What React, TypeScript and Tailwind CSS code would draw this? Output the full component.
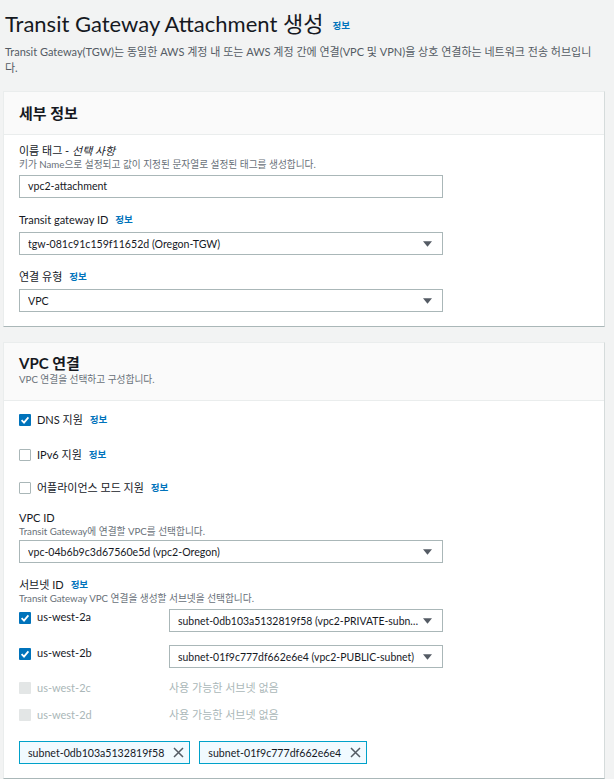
import React from "react";

const Info = ({ className = "" }: { className?: string }) => (
  <span className={"text-[9.5px] font-bold text-[#0073bb] " + (className || "ml-[7px]")}>정보</span>
);

const Arrow = () => (
  <svg width="9" height="6" viewBox="0 0 9 6" className="shrink-0">
    <path d="M0 0.3 L9 0.3 L4.5 5.8 Z" fill="#545b64" />
  </svg>
);

const Select = ({
  value,
  className = "",
  textClass = "text-[10.6px]",
}: {
  value: string;
  className?: string;
  textClass?: string;
}) => (
  <div
    className={
      "flex items-center h-[23px] border border-[#aab7b8] bg-white pl-[8px] pr-[10px] gap-[4px] " + className
    }
  >
    <span className={"flex-1 truncate leading-[14px] " + textClass}>{value}</span>
    <Arrow />
  </div>
);

const Check = ({ state }: { state: "on" | "off" | "disabled" }) => {
  if (state === "on")
    return (
      <span className="w-[12px] h-[12px] bg-[#0073bb] rounded-[1px] flex items-center justify-center shrink-0">
        <svg width="10" height="10" viewBox="0 0 10 10">
          <path d="M1.6 5.2 L4 7.6 L8.4 2.4" stroke="#fff" strokeWidth="1.8" fill="none" />
        </svg>
      </span>
    );
  if (state === "off")
    return <span className="w-[12px] h-[12px] border border-[#aab7b8] bg-white rounded-[1px] shrink-0" />;
  return <span className="w-[12px] h-[12px] bg-[#e3e6e6] rounded-[1px] shrink-0" />;
};

const XIcon = () => (
  <svg width="11" height="11" viewBox="0 0 11 11">
    <path d="M1 1 L10 10 M10 1 L1 10" stroke="#545b64" strokeWidth="1.5" />
  </svg>
);

const Token = ({ label }: { label: string }) => (
  <div className="flex items-center h-[23px] border border-[#00a1c9] bg-[#f1faff] pl-[8px] pr-[5px] gap-[9px]">
    <span className="text-[10.6px] leading-[14px]">{label}</span>
    <XIcon />
  </div>
);

export default function App() {
  return (
    <div className="w-[614px] min-h-[779px] bg-[#f2f3f3] text-[#16191f] font-['Lato','Noto_Sans_CJK_KR',sans-serif] overflow-hidden">
      <div className="pl-[5px] pr-[18px] pt-[7px]">
        <h1 className="text-[22px] leading-[30px] font-normal flex items-center">
          <span>Transit Gateway Attachment 생성</span>
          <Info className="ml-[9px] mt-[4px]" />
        </h1>
        <p className="text-[11px] leading-[16px] text-[#545b64] mt-[3px]">
          Transit Gateway(TGW)는 동일한 AWS 계정 내 또는 AWS 계정 간에 연결(VPC 및 VPN)을 상호 연결하는 네트워크 전송 허브입니다.
        </p>
      </div>

      {/* Card 1 */}
      <div className="ml-[3px] w-[602px] mt-[15px] bg-white border border-[#eaeded] border-b-[#aab7b8] border-r-[#d5dbdb]">
        <div className="h-[43px] bg-[#fafafa] border-b border-[#eaeded] px-[15px] flex items-center">
          <h2 className="text-[15px] font-bold leading-[20px]">세부 정보</h2>
        </div>
        <div className="px-[15px] pt-[9px] pb-[14px] w-[454px]">
          <div className="text-[11px] leading-[14px]">
            이름 태그 - <i>선택 사항</i>
          </div>
          <div className="text-[9.7px] leading-[13px] text-[#687078]">
            키가 Name으로 설정되고 값이 지정된 문자열로 설정된 태그를 생성합니다.
          </div>
          <div className="mt-[4px] h-[23px] border border-[#aab7b8] bg-white pl-[8px] flex items-center text-[10.6px]">
            vpc2-attachment
          </div>

          <div className="mt-[14px] text-[11px] leading-[16px] flex items-center">
            Transit gateway ID <Info />
          </div>
          <Select className="mt-[4px]" value="tgw-081c91c159f11652d (Oregon-TGW)" />

          <div className="mt-[14px] text-[11px] leading-[16px] flex items-center">
            연결 유형 <Info />
          </div>
          <Select className="mt-[4px]" value="VPC" />
        </div>
      </div>

      {/* Card 2 */}
      <div className="ml-[3px] w-[602px] mt-[15px] bg-white border border-[#eaeded] border-b-[#aab7b8] border-r-[#d5dbdb]">
        <div className="bg-[#fafafa] border-b border-[#eaeded] px-[15px] pt-[10px] pb-[14px]">
          <h2 className="text-[15px] font-bold leading-[20px]">VPC 연결</h2>
          <div className="text-[9.7px] leading-[13px] text-[#687078]">VPC 연결을 선택하고 구성합니다.</div>
        </div>
        <div className="px-[15px] pt-[9px] pb-[14px] w-[454px]">
          <div className="h-[20px] flex items-center gap-[6px] text-[11px]">
            <Check state="on" />
            <span>DNS 지원</span>
            <Info className="ml-[1px]" />
          </div>
          <div className="mt-[15px] h-[20px] flex items-center gap-[6px] text-[11px]">
            <Check state="off" />
            <span>IPv6 지원</span>
            <Info className="ml-[1px]" />
          </div>
          <div className="mt-[13px] h-[20px] flex items-center gap-[6px] text-[11px]">
            <Check state="off" />
            <span>어플라이언스 모드 지원</span>
            <Info className="ml-[1px]" />
          </div>

          <div className="mt-[13px] text-[11px] leading-[14px]">VPC ID</div>
          <div className="text-[9.7px] leading-[12px] text-[#687078]">Transit Gateway에 연결할 VPC를 선택합니다.</div>
          <Select className="mt-[3px]" value="vpc-04b6b9c3d67560e5d (vpc2-Oregon)" />

          <div className="mt-[15px] text-[11px] leading-[14px] flex items-center">
            서브넷 ID <Info />
          </div>
          <div className="text-[9.7px] leading-[13px] text-[#687078]">
            Transit Gateway VPC 연결을 생성할 서브넷을 선택합니다.
          </div>

          <div className="mt-[4px] flex items-start">
            <div className="w-[150px] shrink-0 flex items-center gap-[6px] pt-[1px] h-[16px] text-[11px]">
              <Check state="on" />
              <span>us-west-2a</span>
            </div>
            <Select
              className="w-[274px] h-[22px]"
              textClass="text-[10.45px]"
              value="subnet-0db103a5132819f58 (vpc2-PRIVATE-subnet)"
            />
          </div>
          <div className="mt-[13px] flex items-start">
            <div className="w-[150px] shrink-0 flex items-center gap-[6px] pt-[1px] h-[16px] text-[11px]">
              <Check state="on" />
              <span>us-west-2b</span>
            </div>
            <Select
              className="w-[274px] h-[22px]"
              textClass="text-[10.45px]"
              value="subnet-01f9c777df662e6e4 (vpc2-PUBLIC-subnet)"
            />
          </div>
          <div className="mt-[10px] h-[20px] flex items-center text-[11px] text-[#aab7b8]">
            <div className="w-[150px] shrink-0 flex items-center gap-[6px]">
              <Check state="disabled" />
              <span>us-west-2c</span>
            </div>
            <span>사용 가능한 서브넷 없음</span>
          </div>
          <div className="mt-[7px] h-[20px] flex items-center text-[11px] text-[#aab7b8]">
            <div className="w-[150px] shrink-0 flex items-center gap-[6px]">
              <Check state="disabled" />
              <span>us-west-2d</span>
            </div>
            <span>사용 가능한 서브넷 없음</span>
          </div>

          <div className="mt-[16px] flex gap-[9px]">
            <Token label="subnet-0db103a5132819f58" />
            <Token label="subnet-01f9c777df662e6e4" />
          </div>
        </div>
      </div>
    </div>
  );
}
